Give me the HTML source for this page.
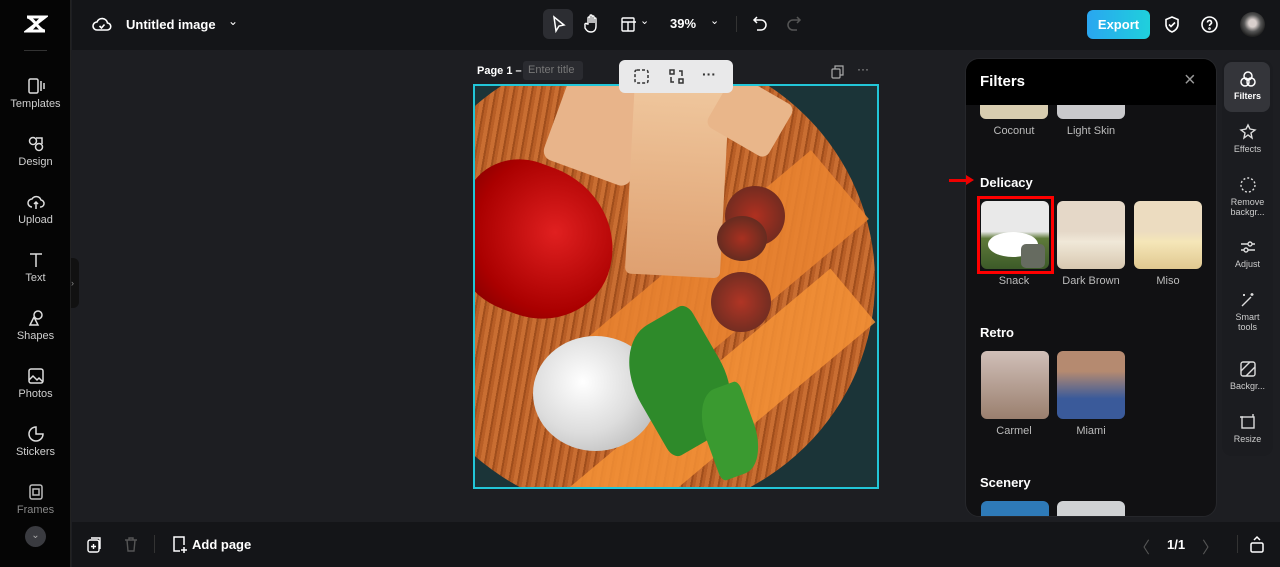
<!DOCTYPE html><html><head><style>
*{margin:0;padding:0;box-sizing:border-box}
body{width:1280px;height:567px;overflow:hidden;background:#1d1e22;font-family:"Liberation Sans",sans-serif;color:#fff;position:relative}
.a{position:absolute}
.side{left:0;top:0;width:71px;height:567px;background:#050505;border-right:1px solid #222}
.si{position:absolute;left:0;width:71px;text-align:center;font-size:11px;color:#cfcfcf}
.si svg{display:block;margin:0 auto 3px}
.top{left:72px;top:0;width:1208px;height:50px;background:#141518}
.bot{left:72px;top:522px;width:1208px;height:45px;background:#141518}
.panel{left:965px;top:58px;width:252px;height:459px;background:#111113;border-radius:14px;overflow:hidden;border:1px solid #26272b}
.th{position:absolute;width:68px;height:68px;border-radius:6px}
.lbl{position:absolute;font-size:11px;color:#bbb;text-align:center;width:76px}
.h{position:absolute;font-size:13px;font-weight:bold;left:14px}
.rb{left:1222px;top:60px;width:51px;height:396px;background:#1b1c20;border-radius:10px}
.ri{position:absolute;left:0;width:51px;text-align:center;font-size:9px;color:#ccc;line-height:10px}
.ri svg{display:block;margin:0 auto 3px}
</style></head><body>
<div class="a side">
 <svg class="a" style="left:24px;top:14px" width="24" height="20" viewBox="0 0 24 20"><path d="M3 3h18L3 17h18M3 3c6 0 12 14 18 14M21 3C15 3 9 17 3 17" stroke="#fff" stroke-width="3" fill="none"/></svg>
 <div class="a" style="left:24px;top:50px;width:23px;height:1px;background:#333"></div>
 <div class="si" style="top:77px"><svg width="18" height="18" viewBox="0 0 18 18" fill="none" stroke="#ddd" stroke-width="1.5"><rect x="2" y="2" width="9" height="14" rx="1.5"/><path d="M14 4v10M17 6v6"/></svg>Templates</div>
 <div class="si" style="top:135px"><svg width="18" height="18" viewBox="0 0 18 18" fill="none" stroke="#ddd" stroke-width="1.5"><circle cx="6" cy="6" r="3.5"/><circle cx="12" cy="12" r="3.5"/><path d="M9 3l6 0 0 6"/></svg>Design</div>
 <div class="si" style="top:193px"><svg width="18" height="18" viewBox="0 0 18 18" fill="none" stroke="#ddd" stroke-width="1.5"><path d="M5 14a4 4 0 010-8 5 5 0 019 1 3.5 3.5 0 01-1 7M9 9v7M7 11l2-2 2 2"/></svg>Upload</div>
 <div class="si" style="top:251px"><svg width="18" height="18" viewBox="0 0 18 18" fill="none" stroke="#ddd" stroke-width="1.5"><path d="M3 3h12M9 3v13"/></svg>Text</div>
 <div class="si" style="top:309px"><svg width="18" height="18" viewBox="0 0 18 18" fill="none" stroke="#ddd" stroke-width="1.5"><circle cx="11" cy="6" r="4"/><path d="M3 16l4-8 4 8z"/></svg>Shapes</div>
 <div class="si" style="top:367px"><svg width="18" height="18" viewBox="0 0 18 18" fill="none" stroke="#ddd" stroke-width="1.5"><rect x="2" y="2" width="14" height="14" rx="2"/><path d="M2 13l4-4 4 4 2-2 4 4"/></svg>Photos</div>
 <div class="si" style="top:425px"><svg width="18" height="18" viewBox="0 0 18 18" fill="none" stroke="#ddd" stroke-width="1.5"><path d="M16 9a7 7 0 11-7-7v7z"/></svg>Stickers</div>
 <div class="si" style="top:483px;color:#888"><svg width="18" height="18" viewBox="0 0 18 18" fill="none" stroke="#bbb" stroke-width="1.5"><rect x="3" y="2" width="12" height="14" rx="2"/><rect x="6" y="6" width="6" height="6"/></svg>Frames</div>
 <div class="a" style="left:25px;top:526px;width:21px;height:21px;border-radius:50%;background:#3a3b40;color:#aaa;font-size:10px;text-align:center;line-height:20px">⌄</div>
</div>
<div class="a" style="left:71px;top:258px;width:8px;height:50px;background:#111;border-radius:0 6px 6px 0;color:#888;font-size:9px;line-height:50px">›</div>
<div class="a top">
 <svg class="a" style="left:20px;top:15px" width="20" height="18" viewBox="0 0 20 18" fill="none" stroke="#fff" stroke-width="1.6"><path d="M5 15a4 4 0 010-8 5.5 5.5 0 0110.5 1A3.5 3.5 0 0115 15z"/><path d="M7.5 11l2 2 3-3.5"/></svg>
 <div class="a" style="left:54px;top:17px;font-size:13px;font-weight:bold">Untitled image</div>
 <div class="a" style="left:156px;top:14px;font-size:12px">⌄</div>
 <div class="a" style="left:471px;top:9px;width:30px;height:30px;background:#2c2d32;border-radius:6px"></div>
 <svg class="a" style="left:479px;top:15px" width="16" height="18" viewBox="0 0 16 18"><path d="M3 2l10 8-5 1-3 5z" fill="none" stroke="#fff" stroke-width="1.5"/></svg>
 <svg class="a" style="left:511px;top:14px" width="18" height="20" viewBox="0 0 18 20" fill="none" stroke="#fff" stroke-width="1.4"><path d="M5 10V4a1 1 0 012 0v5V2a1 1 0 012 0v7V3a1 1 0 012 0v6V5a1 1 0 012 0v7c0 4-2 6-5 6s-4-1-6-4L2 11a1 1 0 012-1z"/></svg>
 <svg class="a" style="left:548px;top:16px" width="16" height="16" viewBox="0 0 16 16" fill="none" stroke="#fff" stroke-width="1.4"><rect x="2" y="2" width="12" height="13" rx="1"/><path d="M2 6h14M8 6v9"/></svg>
 <div class="a" style="left:568px;top:14px;font-size:11px">⌄</div>
 <div class="a" style="left:598px;top:16px;font-size:13px;font-weight:bold">39%</div>
 <div class="a" style="left:638px;top:14px;font-size:11px">⌄</div>
 <div class="a" style="left:664px;top:16px;width:1px;height:16px;background:#333"></div>
 <svg class="a" style="left:680px;top:15px" width="16" height="18" viewBox="0 0 16 18" fill="none" stroke="#fff" stroke-width="1.5"><path d="M5 2L2 5l3 3M2 5h7a5 5 0 010 10H5"/></svg>
 <svg class="a" style="left:714px;top:15px" width="16" height="18" viewBox="0 0 16 18" fill="none" stroke="#555" stroke-width="1.5"><path d="M11 2l3 3-3 3M14 5H7a5 5 0 000 10h4"/></svg>
 <div class="a" style="left:1015px;top:10px;width:63px;height:29px;border-radius:6px;background:linear-gradient(90deg,#2aa6f0,#1fd0dc);font-size:13px;font-weight:bold;text-align:center;line-height:29px">Export</div>
 <svg class="a" style="left:1091px;top:15px" width="18" height="19" viewBox="0 0 18 19" fill="none" stroke="#fff" stroke-width="1.6"><path d="M9 2l6 2.5v5C15 13 12 16 9 17 6 16 3 13 3 9.5v-5z"/><path d="M6 9.5l2 2 4-4"/></svg>
 <svg class="a" style="left:1128px;top:15px" width="19" height="19" viewBox="0 0 19 19" fill="none" stroke="#fff" stroke-width="1.6"><circle cx="9.5" cy="9.5" r="7.5"/><path d="M7.5 7.5a2 2 0 113 1.7c-.8.5-1 1-1 1.8"/><circle cx="9.5" cy="13.5" r=".5"/></svg>
 <div class="a" style="left:1168px;top:12px;width:25px;height:25px;border-radius:50%;background:radial-gradient(circle at 50% 45%,#d8cfcc 20%,#555 45%,#222 70%)"></div>
</div>
<div class="a" style="left:477px;top:65px;font-size:11px;font-weight:bold">Page 1 –</div>
<div class="a" style="left:523px;top:61px;width:60px;height:19px;background:#2a2b30;border-radius:3px;color:#777;font-size:11px;line-height:19px;padding-left:5px">Enter title</div>
<div class="a" style="left:619px;top:60px;width:114px;height:33px;background:#e9e9ea;border-radius:6px;z-index:2"></div>
<svg class="a" style="left:633px;top:68px;z-index:3" width="17" height="17" viewBox="0 0 17 17" fill="none" stroke="#333" stroke-width="1.5" stroke-dasharray="3 2"><rect x="2" y="2" width="13" height="13" rx="2"/></svg>
<svg class="a" style="left:668px;top:68px;z-index:3" width="17" height="17" viewBox="0 0 17 17" fill="none" stroke="#333" stroke-width="1.5"><rect x="2" y="2" width="4" height="4"/><rect x="11" y="11" width="4" height="4"/><path d="M11 3h3v5M6 14H3V9"/></svg>
<div class="a" style="left:702px;top:66px;color:#333;font-size:14px;font-weight:bold;z-index:3">···</div>
<svg class="a" style="left:831px;top:65px" width="13" height="14" viewBox="0 0 13 14" fill="none" stroke="#aaa" stroke-width="1.2"><rect x="1" y="4" width="8" height="9" rx="1"/><path d="M4 4V1h8v9H9"/></svg>
<div class="a" style="left:857px;top:62px;color:#aaa;font-size:12px">···</div>
<div class="a" style="left:473px;top:84px;width:406px;height:405px;border:2px solid #22c6d8;background:#1b3438;overflow:hidden">
 <div class="a" style="left:-80px;top:-40px;width:480px;height:470px;border-radius:50%;background:repeating-linear-gradient(100deg,#b85e26 0 3px,#c96e32 3px 7px,#a04e1c 7px 9px)"></div>
 <div class="a" style="left:100px;top:150px;width:300px;height:90px;transform:rotate(-40deg);background:#eb8530;opacity:.85"></div>
 <div class="a" style="left:60px;top:290px;width:360px;height:70px;transform:rotate(-40deg);background:#f59236;opacity:.85"></div>
 <div class="a" style="left:82px;top:-20px;width:92px;height:110px;background:#e8b48a;transform:rotate(20deg);border-radius:10px"></div>
 <div class="a" style="left:155px;top:-10px;width:95px;height:200px;background:linear-gradient(#f0c9a0,#dfa070);border-radius:6px;transform:rotate(3deg)"></div>
 <div class="a" style="left:240px;top:0px;width:70px;height:60px;background:#e9b68a;transform:rotate(30deg);border-radius:8px"></div>
 <div class="a" style="left:-20px;top:80px;width:160px;height:150px;background:radial-gradient(circle at 60% 40%,#e02020,#a00 60%,#600);border-radius:40% 60% 50% 50%;transform:rotate(20deg)"></div>
 <div class="a" style="left:250px;top:100px;width:60px;height:60px;border-radius:50%;background:radial-gradient(#b03020,#5a2a20)"></div>
 <div class="a" style="left:242px;top:130px;width:50px;height:45px;border-radius:50%;background:radial-gradient(#a83020,#4a2a20)"></div>
 <div class="a" style="left:236px;top:186px;width:60px;height:60px;border-radius:50%;background:radial-gradient(#b03525,#5a2a20)"></div>
 <div class="a" style="left:58px;top:250px;width:125px;height:115px;border-radius:50%;background:radial-gradient(circle at 40% 40%,#fff,#ddd 50%,#aaa)"></div>
 <div class="a" style="left:160px;top:230px;width:90px;height:130px;background:#2e8a2a;border-radius:50% 10%;transform:rotate(-30deg)"></div>
 <div class="a" style="left:230px;top:300px;width:50px;height:90px;background:#3a9a30;border-radius:50% 10%;transform:rotate(-20deg)"></div>
</div>
<div class="a panel">
 <div class="a" style="left:0;top:0;width:252px;height:46px;background:#000"></div>
 <div class="a" style="left:14px;top:14px;font-size:15px;font-weight:bold">Filters</div>
 <div class="a" style="left:218px;top:10px;color:#999;font-size:20px">×</div>
 <div class="th" style="left:14px;top:46px;height:14px;border-radius:0 0 6px 6px;background:#d8cdb0"></div>
 <div class="th" style="left:91px;top:46px;height:14px;border-radius:0 0 6px 6px;background:#c9c9cc"></div>
 <div class="lbl" style="left:10px;top:66px">Coconut</div>
 <div class="lbl" style="left:87px;top:66px">Light Skin</div>
 <div class="h" style="top:116px">Delicacy</div>
 <div class="a" style="left:11px;top:137px;width:77px;height:78px;border:3px solid #f00"></div>
 <div class="th" style="left:15px;top:142px;background:linear-gradient(#e9e9e9 45%,#5f7a3a 55%,#3c5a28)"></div>
 <div class="a" style="left:22px;top:173px;width:50px;height:25px;border-radius:50%;background:#fff"></div>
 <div class="a" style="left:55px;top:185px;width:24px;height:24px;border-radius:5px;background:#666b60"></div>
 <div class="th" style="left:91px;top:142px;background:linear-gradient(#e5d8c8 45%,#f0e8d8 60%,#d8c8b0)"></div>
 <div class="th" style="left:168px;top:142px;background:linear-gradient(#ecdcc0 45%,#f5e6b8 60%,#e0c890)"></div>
 <div class="lbl" style="left:10px;top:216px">Snack</div>
 <div class="lbl" style="left:87px;top:216px">Dark Brown</div>
 <div class="lbl" style="left:164px;top:216px">Miso</div>
 <div class="h" style="top:266px">Retro</div>
 <div class="th" style="left:15px;top:292px;background:linear-gradient(#d0bfb8,#9a7f6e)"></div>
 <div class="th" style="left:91px;top:292px;background:linear-gradient(#b58a70 30%,#3a5a9a 70%)"></div>
 <div class="lbl" style="left:10px;top:366px">Carmel</div>
 <div class="lbl" style="left:87px;top:366px">Miami</div>
 <div class="h" style="top:416px">Scenery</div>
 <div class="th" style="left:15px;top:442px;background:#2e7ab8"></div>
 <div class="th" style="left:91px;top:442px;background:#d0d2d4"></div>
</div>
<div class="a" style="left:949px;top:179px;width:20px;height:3px;background:#e00"></div>
<div class="a" style="left:966px;top:175px;border-left:8px solid #e00;border-top:5px solid transparent;border-bottom:5px solid transparent"></div>
<div class="a rb">
 <div class="a" style="left:2px;top:2px;width:46px;height:50px;background:#34353a;border-radius:8px"></div>
 <div class="ri" style="top:10px;color:#fff;font-weight:bold"><svg width="18" height="18" viewBox="0 0 18 18" fill="none" stroke="#fff" stroke-width="1.5"><circle cx="9" cy="6" r="4"/><circle cx="6" cy="12" r="4"/><circle cx="12" cy="12" r="4"/></svg>Filters</div>
 <div class="ri" style="top:63px"><svg width="18" height="18" viewBox="0 0 18 18" fill="none" stroke="#ddd" stroke-width="1.4"><path d="M9 2l2 4 5 1-4 3 1 5-4-3-4 3 1-5-4-3 5-1z"/></svg>Effects</div>
 <div class="ri" style="top:116px"><svg width="18" height="18" viewBox="0 0 18 18" fill="none" stroke="#ddd" stroke-width="1.4" stroke-dasharray="2 2"><circle cx="9" cy="9" r="7"/></svg>Remove<br>backgr...</div>
 <div class="ri" style="top:178px"><svg width="18" height="18" viewBox="0 0 18 18" fill="none" stroke="#ddd" stroke-width="1.4"><path d="M2 6h14M2 12h14"/><circle cx="11" cy="6" r="2" fill="#1b1c20"/><circle cx="7" cy="12" r="2" fill="#1b1c20"/></svg>Adjust</div>
 <div class="ri" style="top:231px"><svg width="18" height="18" viewBox="0 0 18 18" fill="none" stroke="#ddd" stroke-width="1.4"><path d="M3 15L12 6M13 2v3M11.5 3.5h3M5 3v2M4 4h2"/></svg>Smart<br>tools</div>
 <div class="ri" style="top:300px"><svg width="18" height="18" viewBox="0 0 18 18" fill="none" stroke="#ddd" stroke-width="1.4"><rect x="2" y="2" width="14" height="14" rx="2"/><path d="M2 11l9-9M7 16l9-9"/></svg>Backgr...</div>
 <div class="ri" style="top:353px"><svg width="18" height="18" viewBox="0 0 18 18" fill="none" stroke="#ddd" stroke-width="1.4"><rect x="3" y="4" width="12" height="11"/><path d="M1 4h3M14 1v3"/></svg>Resize</div>
</div>
<div class="a bot">
 <svg class="a" style="left:14px;top:14px" width="16" height="17" viewBox="0 0 16 17" fill="none" stroke="#fff" stroke-width="1.4"><rect x="2" y="4" width="11" height="12" rx="2"/><path d="M5 2h9v11M7.5 8v5M5 10.5h5"/></svg>
 <svg class="a" style="left:52px;top:14px" width="14" height="17" viewBox="0 0 14 17" fill="none" stroke="#555" stroke-width="1.4"><path d="M1 4h12M5 4V2h4v2M3 4l1 11h6l1-11"/></svg>
 <div class="a" style="left:82px;top:13px;width:1px;height:18px;background:#333"></div>
 <svg class="a" style="left:99px;top:13px" width="17" height="19" viewBox="0 0 17 19" fill="none" stroke="#fff" stroke-width="1.5"><path d="M9 16H3V2h10v8M13 12v6M10 15h6"/></svg>
 <div class="a" style="left:120px;top:15px;font-size:13px;font-weight:bold">Add page</div>
 <div class="a" style="left:1062px;top:12px;color:#555;font-size:16px">〈</div>
 <div class="a" style="left:1095px;top:15px;font-size:13px;font-weight:bold">1/1</div>
 <div class="a" style="left:1130px;top:12px;color:#555;font-size:16px">〉</div>
 <div class="a" style="left:1165px;top:13px;width:1px;height:18px;background:#333"></div>
 <svg class="a" style="left:1177px;top:13px" width="16" height="19" viewBox="0 0 16 19" fill="none" stroke="#fff" stroke-width="1.5"><rect x="2" y="8" width="12" height="9" rx="1.5"/><path d="M5 5l3-3 3 3"/></svg>
</div>
</body></html>
